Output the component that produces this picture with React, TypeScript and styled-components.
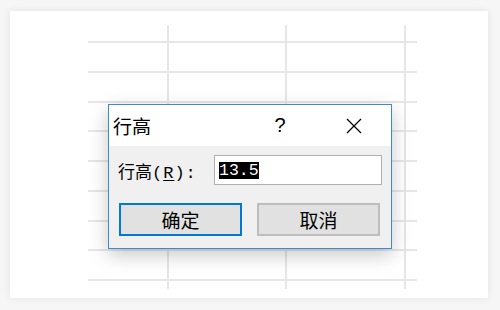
import React from 'react';
import styled, { createGlobalStyle } from 'styled-components';

const GlobalStyle = createGlobalStyle`
  html, body {
    margin: 0;
    padding: 0;
    background: #f6f6f6;
    font-family: 'Noto Sans CJK SC', 'Noto Sans', sans-serif;
  }
`;

const Page = styled.div`
  width: 500px;
  height: 310px;
  box-sizing: border-box;
  padding: 11px 12px 12px 10px;
`;

const Card = styled.div`
  position: relative;
  height: 100%;
  box-sizing: border-box;
  padding: 14px 0 0 78px;
  background: #ffffff;
  box-shadow: 0 0 8px rgba(0, 0, 0, 0.08);
`;

const Sheet = styled.div`
  display: grid;
  grid-template-columns: 81px 118px 119px 11px;
  grid-template-rows: 18px repeat(8, 29.75px) 8px;
`;

const Cell = styled.div<{ $lastCol: boolean; $lastRow: boolean }>`
  box-sizing: border-box;
  border-right: ${(p) => (p.$lastCol ? 'none' : '2px solid #e6e6e6')};
  border-bottom: ${(p) => (p.$lastRow ? 'none' : '2px solid #e6e6e6')};
`;

const Dialog = styled.div`
  position: absolute;
  left: 98px;
  top: 93px;
  width: 284px;
  height: 145px;
  box-sizing: border-box;
  display: flex;
  flex-direction: column;
  background: #f0f0f0;
  border: 1px solid #3f88d3;
  box-shadow: 0 6px 18px rgba(0, 0, 0, 0.22);
`;

const TitleBar = styled.div`
  display: flex;
  align-items: center;
  height: 41px;
  background: #ffffff;
`;

const Title = styled.div`
  flex: 1;
  padding-left: 4px;
  font-size: 19px;
  color: #000;
`;

const TitleButton = styled.div`
  width: 74px;
  height: 100%;
  display: flex;
  align-items: center;
  justify-content: center;
  font-family: 'Liberation Sans', sans-serif;
  font-size: 20px;
  color: #000;
`;

const Body = styled.div`
  flex: 1;
  display: flex;
  flex-direction: column;
  padding: 9px 9px 12px 9px;
`;

const FieldRow = styled.div`
  display: flex;
  align-items: center;
  justify-content: space-between;
  height: 30px;
`;

const Label = styled.div`
  font-size: 17px;
  color: #000;
`;

const Latin = styled.span`
  font-family: 'Liberation Mono', monospace;
  font-size: 17px;
  letter-spacing: 1px;

  & u {
    text-decoration-thickness: 1px;
    text-underline-offset: 2px;
  }
`;

const TextBox = styled.div`
  width: 168px;
  height: 30px;
  box-sizing: border-box;
  display: flex;
  align-items: center;
  padding-left: 4px;
  background: #ffffff;
  border: 1px solid #b0b0b0;
`;

const Selected = styled.span`
  background: #000;
  color: #fff;
  font-family: 'Liberation Mono', monospace;
  font-size: 16.5px;
  line-height: 17px;
`;

const ButtonRow = styled.div`
  display: flex;
  gap: 15px;
  margin: 18px 2px 0 1px;
`;

const Button = styled.div<{ $primary?: boolean }>`
  width: 123px;
  height: 33px;
  box-sizing: border-box;
  display: flex;
  align-items: center;
  justify-content: center;
  background: #e1e1e1;
  border: 2px solid ${(p) => (p.$primary ? '#0078d7' : '#bdbdbd')};
  font-size: 19px;
  color: #000;
`;

const ROWS = 10;
const COLS = 4;

export default function App() {
  const cells = [];
  for (let r = 0; r < ROWS; r++) {
    for (let c = 0; c < COLS; c++) {
      cells.push(<Cell key={`${r}-${c}`} $lastCol={c === COLS - 1} $lastRow={r === ROWS - 1} />);
    }
  }

  return (
    <Page>
      <GlobalStyle />
      <Card>
        <Sheet>{cells}</Sheet>
        <Dialog>
          <TitleBar>
            <Title>行高</Title>
            <TitleButton>?</TitleButton>
            <TitleButton>
              <svg width="16" height="16" viewBox="0 0 16 16">
                <path d="M1 1 L15 15 M15 1 L1 15" stroke="#000" strokeWidth="1.3" fill="none" />
              </svg>
            </TitleButton>
          </TitleBar>
          <Body>
            <FieldRow>
              <Label>
                行高
                <Latin>
                  (<u>R</u>):
                </Latin>
              </Label>
              <TextBox>
                <Selected>13.5</Selected>
              </TextBox>
            </FieldRow>
            <ButtonRow>
              <Button $primary>确定</Button>
              <Button>取消</Button>
            </ButtonRow>
          </Body>
        </Dialog>
      </Card>
    </Page>
  );
}
